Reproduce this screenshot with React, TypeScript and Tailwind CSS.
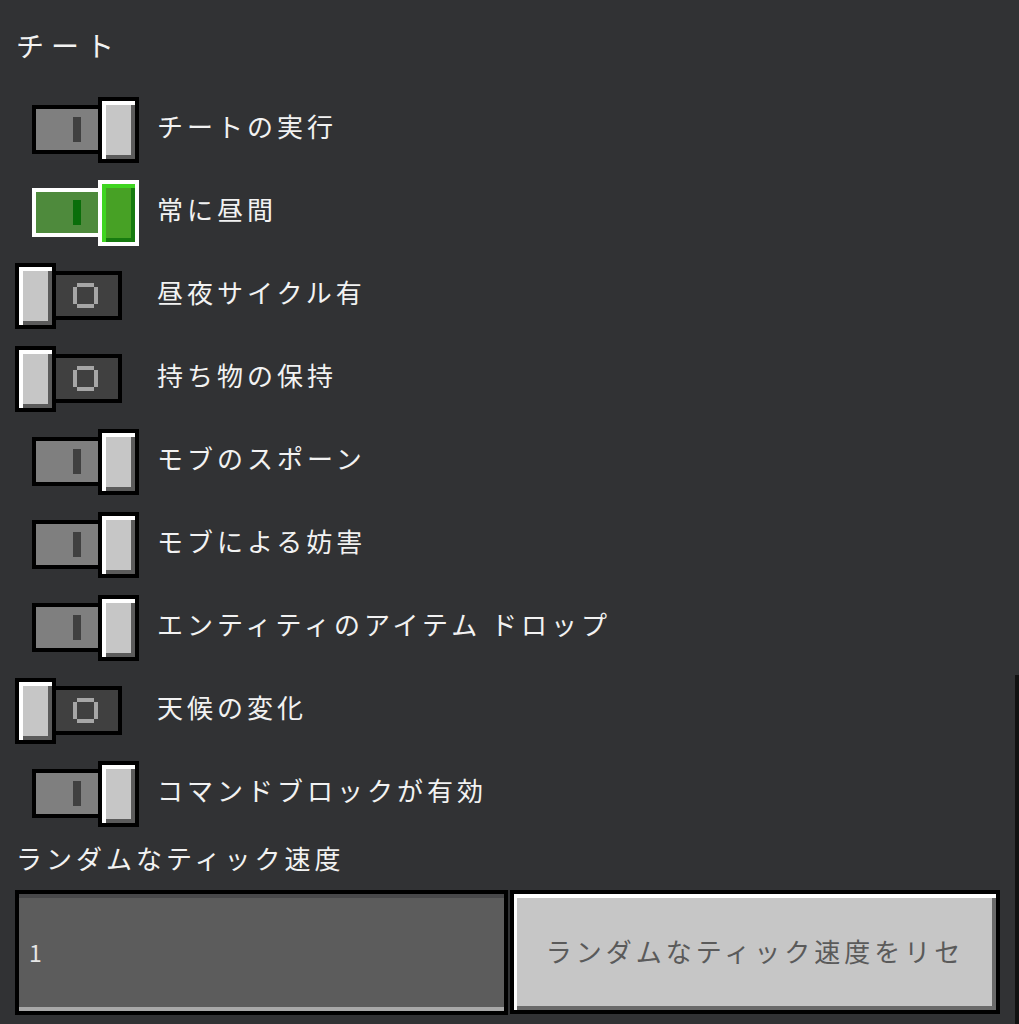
import React from "react";

type Mode = "on" | "green" | "off";

function Ring() {
  return (
    <svg width="25" height="25" viewBox="0 0 25 25" className="block">
      <rect x="4" y="0" width="17" height="4" fill="#a6a6a6" />
      <rect x="4" y="21" width="17" height="4" fill="#a6a6a6" />
      <rect x="0" y="4" width="4" height="17" fill="#a6a6a6" />
      <rect x="21" y="4" width="4" height="17" fill="#a6a6a6" />
    </svg>
  );
}

function Toggle({ mode }: { mode: Mode }) {
  if (mode === "off") {
    return (
      <div className="flex h-[66px] w-[124px] shrink-0 items-center">
        <div className="relative z-10 h-[66px] w-[41px] shrink-0 border-4 border-black bg-[#c6c6c6] shadow-[inset_4px_4px_0_#ffffff,inset_-4px_-4px_0_#5b5b5b]" />
        <div className="-ml-[4px] flex h-[49px] w-[70px] shrink-0 items-center border-4 border-black bg-[#404040] pl-[17px]">
          <Ring />
        </div>
      </div>
    );
  }
  const green = mode === "green";
  return (
    <div className="flex h-[66px] w-[124px] shrink-0 items-center pl-[17px]">
      <div
        className={
          green
            ? "flex h-[49px] w-[70px] shrink-0 items-center border-4 border-white bg-[#4e8a3c] pl-[37px]"
            : "flex h-[49px] w-[70px] shrink-0 items-center border-4 border-black bg-[#7f7f7f] pl-[37px]"
        }
      >
        <div
          className={
            green
              ? "h-[25px] w-[8px] bg-[#0a6e0a]"
              : "h-[25px] w-[8px] bg-[#404040]"
          }
        />
      </div>
      <div
        className={
          green
            ? "relative z-10 -ml-[4px] h-[66px] w-[41px] shrink-0 border-4 border-white bg-[#47a125] shadow-[inset_4px_4px_0_#3fd520,inset_-4px_-4px_0_#177b10]"
            : "relative z-10 -ml-[4px] h-[66px] w-[41px] shrink-0 border-4 border-black bg-[#c6c6c6] shadow-[inset_4px_4px_0_#ffffff,inset_-4px_-4px_0_#5b5b5b]"
        }
      />
    </div>
  );
}

const rows: { label: string; mode: Mode }[] = [
  { label: "チートの実行", mode: "on" },
  { label: "常に昼間", mode: "green" },
  { label: "昼夜サイクル有", mode: "off" },
  { label: "持ち物の保持", mode: "off" },
  { label: "モブのスポーン", mode: "on" },
  { label: "モブによる妨害", mode: "on" },
  { label: "エンティティのアイテム ドロップ", mode: "on" },
  { label: "天候の変化", mode: "off" },
  { label: "コマンドブロックが有効", mode: "on" },
];

export default function App() {
  return (
    <div
      className="relative h-[1024px] w-[1019px] overflow-hidden bg-[#313234] text-[#f2f2f2]"
      style={{ fontFamily: '"Noto Sans CJK JP", "Noto Sans", sans-serif' }}
    >
      <div className="flex h-[88px] items-center pl-[16px] pt-[2px] text-[28px] leading-none tracking-[7px]">
        チート
      </div>
      <div className="flex flex-col">
        {rows.map((r) => (
          <div key={r.label} className="flex h-[83px] items-center gap-[18px] pl-[15px]">
            <Toggle mode={r.mode} />
            <div className="whitespace-pre pb-[8px] text-[26px] leading-none tracking-[4px]">
              {r.label}
            </div>
          </div>
        ))}
      </div>
      <div className="flex h-[55px] items-center pb-[9px] pl-[16px] text-[26px] leading-none tracking-[4px]">
        ランダムなティック速度
      </div>
      <div className="flex gap-[2px] pl-[15px]">
        <div className="flex h-[125px] w-[493px] items-center border-4 border-black bg-[#5c5c5c] pl-[10px] text-[23px] text-[#e6e6e6] shadow-[inset_0_4px_0_#48484a,inset_0_-4px_0_#a8a8a8]">
          1
        </div>
        <div className="flex h-[124px] w-[490px] items-center justify-center border-4 border-black bg-[#c6c6c6] pb-[2px] text-[26px] leading-none tracking-[4px] text-[#5a5a5a] shadow-[inset_3px_4px_0_#ffffff,inset_-4px_-4px_0_#6a6a6a]">
          ランダムなティック速度をリセ
        </div>
      </div>
      <div className="absolute bottom-0 right-0 top-[675px] w-[4px] bg-[#111111]" />
    </div>
  );
}
